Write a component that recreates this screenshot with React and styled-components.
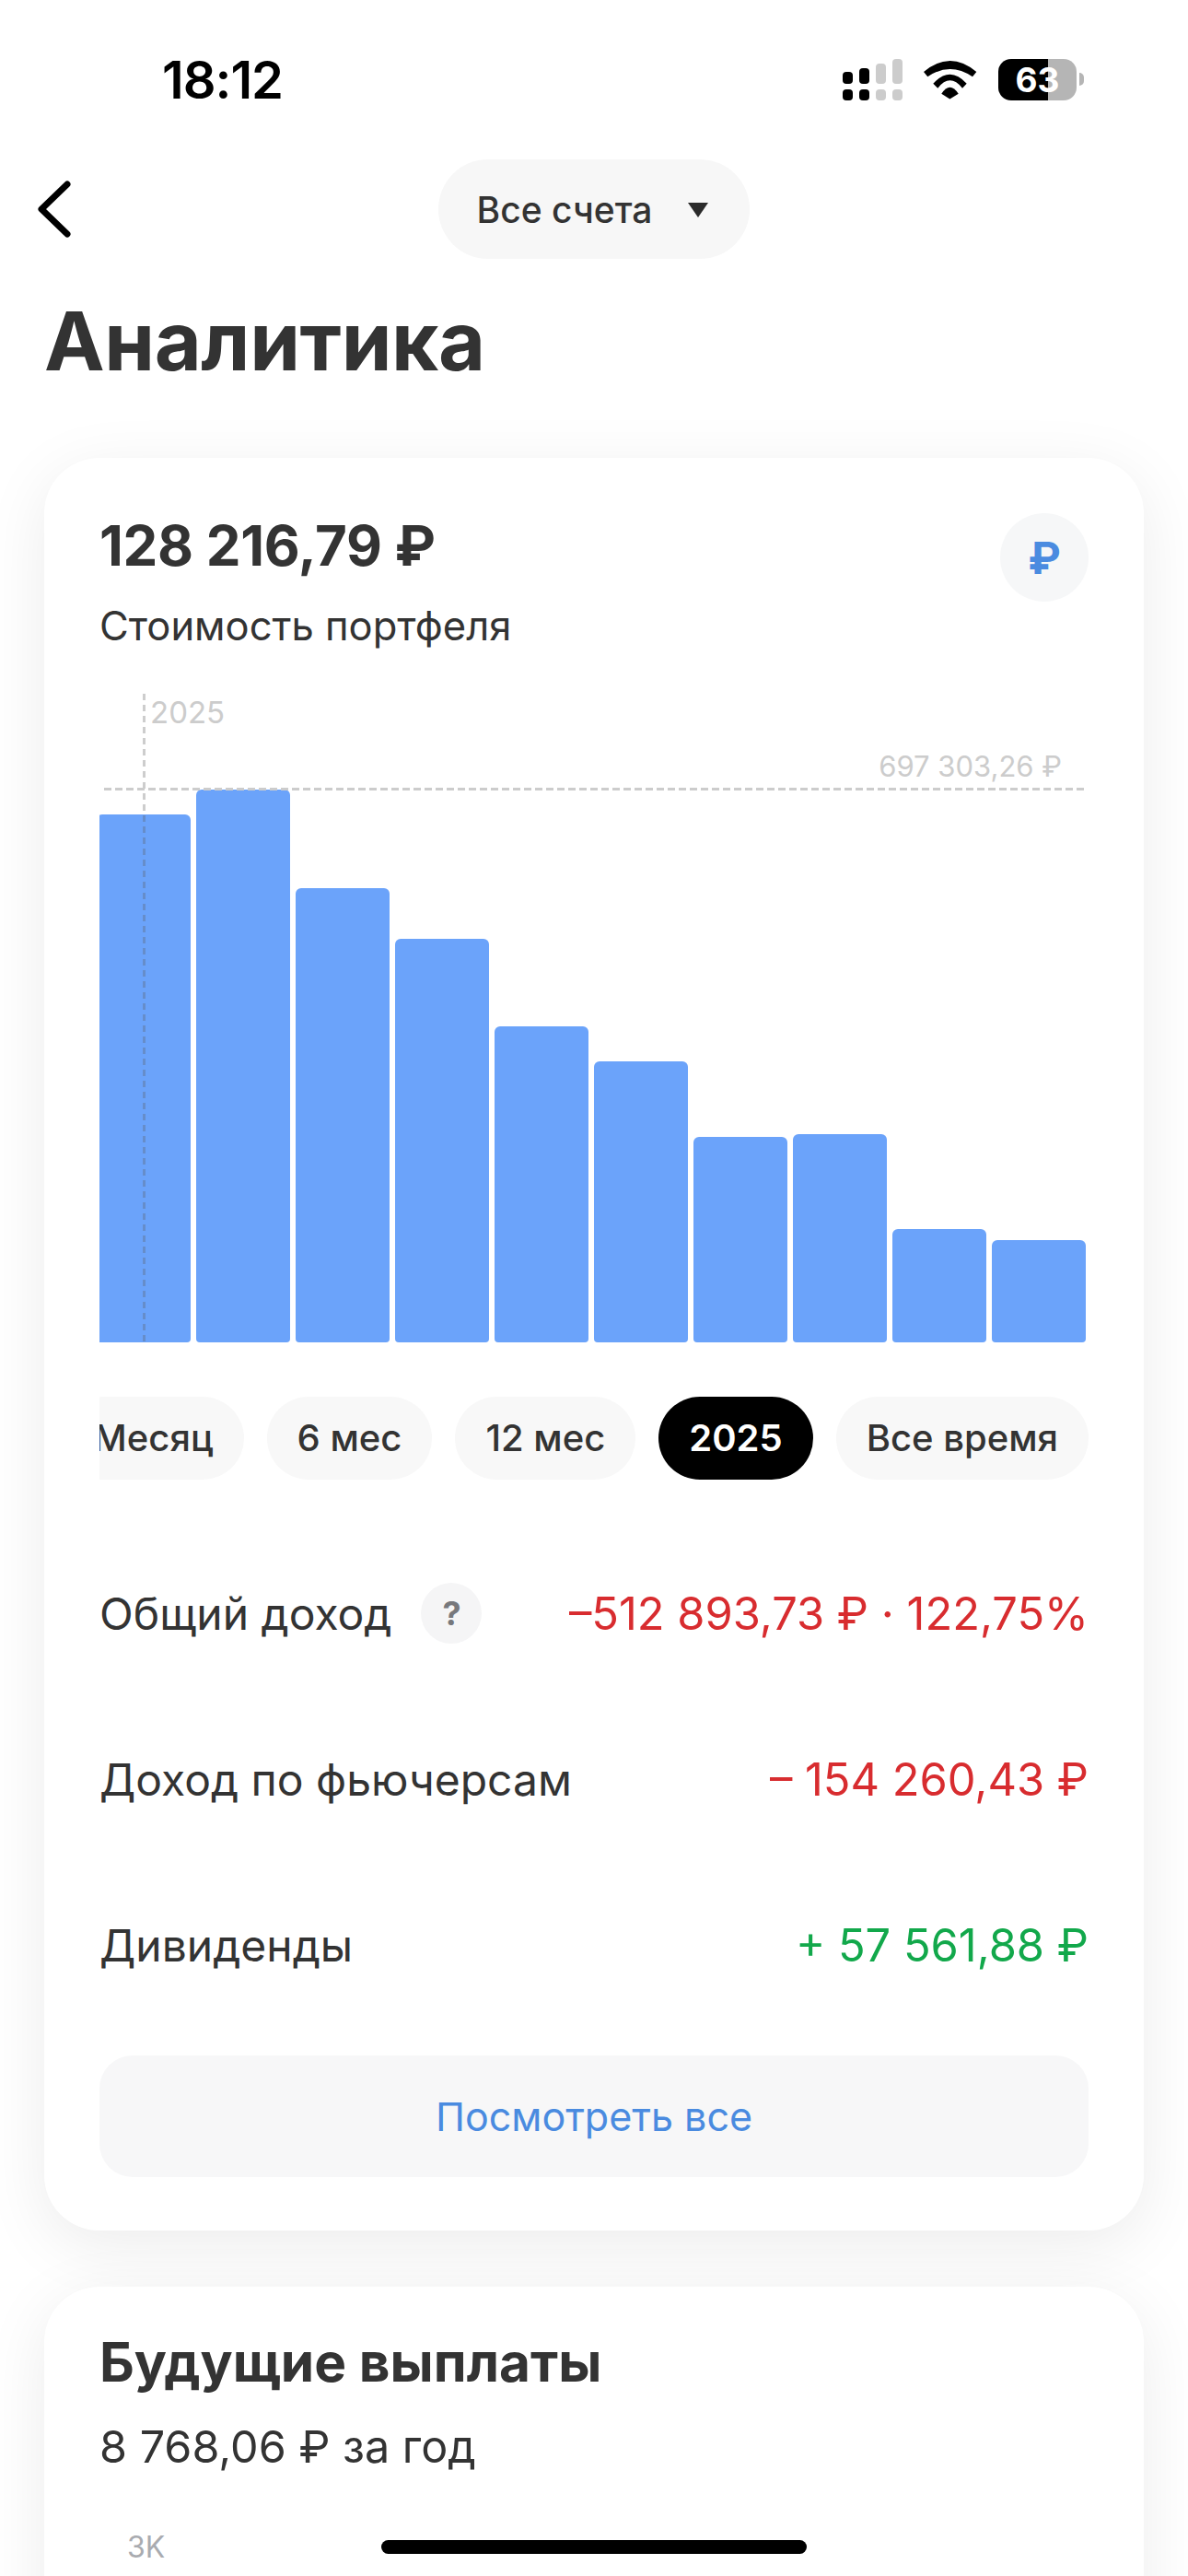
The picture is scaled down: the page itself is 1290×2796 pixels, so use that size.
import React from 'react'
import styled, { createGlobalStyle } from 'styled-components'

const GlobalStyle = createGlobalStyle`
  html, body {
    margin: 0;
    padding: 0;
    background: #ffffff;
    font-family: Inter, "Noto Sans", sans-serif;
    color: #333333;
  }
`

const Screen = styled.div`
  position: relative;
  width: 1290px;
  height: 2796px;
  overflow: hidden;
  background: #ffffff;
`

const StatusBar = styled.div`
  display: flex;
  align-items: center;
  justify-content: space-between;
  height: 45px;
  padding: 64px 121px 64px 176px;
`

const Time = styled.div`
  font-size: 56px;
  font-weight: 600;
  letter-spacing: -1px;
  color: #000000;
`

const StatusIcons = styled.div`
  display: flex;
  align-items: center;
  gap: 23px;
`

const Battery = styled.div`
  position: relative;
  width: 85px;
  height: 45px;
  border-radius: 14px;
  background: linear-gradient(90deg, #000000 63%, #b5b5b5 63%);
  color: #ffffff;
  font-size: 37px;
  font-weight: 700;
  line-height: 45px;
  text-align: center;

  &::after {
    content: '';
    position: absolute;
    left: 88px;
    top: 15px;
    width: 5px;
    height: 14px;
    border-radius: 0 6px 6px 0;
    background: #b5b5b5;
  }
`

const NavRow = styled.div`
  display: grid;
  grid-template-columns: 1fr auto 1fr;
  align-items: center;
  height: 108px;
  padding: 0 40px;
`

const BackIcon = styled.svg`
  display: block;
  width: 38px;
  height: 62px;
`

const AccountPill = styled.div`
  display: flex;
  align-items: center;
  gap: 39px;
  height: 108px;
  padding: 0 45px 0 42px;
  border-radius: 54px;
  background: #f7f7f7;
  font-size: 39px;
  font-weight: 500;
`

const Caret = styled.span`
  width: 0;
  height: 0;
  margin-top: 2px;
  border-left: 11px solid transparent;
  border-right: 11px solid transparent;
  border-top: 16px solid #2b2b2b;
`

const PageTitle = styled.h1`
  margin: 0;
  padding: 36px 0 0 48px;
  height: 216px;
  box-sizing: border-box;
  font-size: 88px;
  line-height: 106px;
  font-weight: 700;
  letter-spacing: -0.4px;
  color: #333333;
`

const Backdrop = styled.div`
  display: flex;
  flex-direction: column;
  gap: 61px;
  padding: 0 48px;
`

const Card = styled.section`
  box-sizing: border-box;
  width: 1194px;
  padding: 60px 60px 58px;
  border-radius: 60px;
  background: #ffffff;
  box-shadow: 0 16px 70px rgba(0, 0, 0, 0.08);
`

const PayoutCard = styled(Card)`
  height: 500px;
  padding-top: 48px;
`

const CardHead = styled.div`
  display: flex;
  justify-content: space-between;
  align-items: flex-start;
`

const Amount = styled.div`
  font-size: 60px;
  line-height: 70px;
  font-weight: 700;
  letter-spacing: -0.3px;
`

const SubText = styled.div`
  margin-top: ${p => p.$gap}px;
  font-size: ${p => p.$size}px;
  line-height: 54px;
  font-weight: 400;
  color: #333333;
`

const CurrencyBadge = styled.div`
  display: flex;
  align-items: center;
  justify-content: center;
  width: 96px;
  height: 96px;
  border-radius: 50%;
  background: #f6f7f8;
  color: #4a8be0;
  font-size: 48px;
  font-weight: 700;
`

const Chart = styled.div`
  position: relative;
  height: 704px;
  margin-top: 47px;
`

const Bars = styled.div`
  display: flex;
  justify-content: flex-end;
  align-items: flex-end;
  gap: 6px;
  width: 1071px;
  height: 100%;
  overflow: hidden;
`

const Bar = styled.div`
  flex: 0 0 102px;
  border-radius: 6px 6px 4px 4px;
  background: #6ba3fa;
`

const VerticalGuide = styled.div`
  position: absolute;
  left: 47px;
  top: 0;
  bottom: 0;
  width: 3px;
  background: repeating-linear-gradient(180deg, rgba(90, 90, 90, 0.3) 0 7px, transparent 7px 12px);
`

const HorizontalGuide = styled.div`
  position: absolute;
  left: 5px;
  top: 102px;
  width: 1064px;
  height: 3px;
  background: repeating-linear-gradient(90deg, #cccccc 0 8px, transparent 8px 12px);
`

const YearLabel = styled.div`
  position: absolute;
  left: 55px;
  top: 0;
  font-size: 33px;
  line-height: 40px;
  color: #cccccc;
`

const MaxLabel = styled.div`
  position: absolute;
  right: 29px;
  top: 60px;
  font-size: 31px;
  line-height: 38px;
  color: #cccccc;
`

const PeriodStrip = styled.div`
  display: flex;
  justify-content: flex-end;
  gap: 25px;
  margin-top: 59px;
  overflow: hidden;
`

const PeriodPill = styled.div`
  flex: none;
  height: 90px;
  line-height: 90px;
  padding: 0 33px;
  border-radius: 45px;
  background: ${p => (p.$active ? '#000000' : '#f8f8f8')};
  color: ${p => (p.$active ? '#ffffff' : '#333333')};
  font-size: 40px;
  font-weight: ${p => (p.$active ? 600 : 500)};
`

const Stats = styled.div`
  margin-top: 55px;
`

const StatRow = styled.div`
  display: flex;
  align-items: center;
  justify-content: space-between;
  height: 180px;
  font-size: 48px;
`

const StatLabel = styled.div`
  display: flex;
  align-items: center;
  gap: 32px;
  color: #333333;
`

const HelpDot = styled.span`
  display: flex;
  align-items: center;
  justify-content: center;
  width: 66px;
  height: 66px;
  border-radius: 50%;
  background: #f5f5f6;
  color: #77787c;
  font-size: 36px;
  font-weight: 700;
`

const StatValue = styled.div`
  font-size: 48.8px;
  color: ${p => (p.$up ? '#12a84b' : '#d82c2f')};
`

const MoreButton = styled.div`
  display: flex;
  align-items: center;
  justify-content: center;
  height: 132px;
  margin-top: 30px;
  border-radius: 36px;
  background: #f7f7f8;
  color: #4a8be0;
  font-size: 43px;
`

const SectionTitle = styled.div`
  font-size: 58.5px;
  line-height: 68px;
  font-weight: 700;
`

const AxisLabel = styled.div`
  margin: 62px 0 0 30px;
  font-size: 32px;
  line-height: 40px;
  color: #a9abb0;
`

const HomeIndicator = styled.div`
  position: absolute;
  left: 414px;
  top: 2757px;
  width: 462px;
  height: 15px;
  border-radius: 8px;
  background: #000000;
`

const barHeights = [573, 600, 493, 438, 343, 305, 223, 226, 123, 111]
const periods = ['Месяц', '6 мес', '12 мес', '2025', 'Все время']

const SignalIcon = () => (
  <svg width="65" height="45" viewBox="0 0 65 45">
    {[14, 10, 5, 0].map((top, i) => (
      <g key={i} fill={i < 2 ? '#000000' : '#cccccc'}>
        <rect x={i * 18} y={top} width="11" height={27 - top} rx="4" />
        <rect x={i * 18} y="33" width="11" height="12" rx="4" />
      </g>
    ))}
  </svg>
)

const WifiIcon = () => (
  <svg width="58" height="42" viewBox="0 0 58 42">
    <path d="M0 12Q28.7-12 57.3 12L53 17.3Q28.7 .7 4.3 17.3Z" />
    <path d="M10.3 24.7Q28.5 4.7 46.7 24.7L42 29.7Q28.5 13 15.3 29.7Z" />
    <path d="M19.3 35.7Q28.5 21.7 37.7 35.7L28.4 41.5Z" />
  </svg>
)

const App = () => {
  return (
    <>
      <GlobalStyle />
      <Screen>
        <StatusBar>
          <Time>18:12</Time>
          <StatusIcons>
            <SignalIcon />
            <WifiIcon />
            <Battery>63</Battery>
          </StatusIcons>
        </StatusBar>

        <NavRow>
          <BackIcon viewBox="0 0 38 62" fill="none" stroke="#000000" strokeWidth="7" strokeLinecap="round" strokeLinejoin="round">
            <path d="M33 4 5 31l28 27" />
          </BackIcon>
          <AccountPill>
            Все счета
            <Caret />
          </AccountPill>
          <div />
        </NavRow>

        <PageTitle>Аналитика</PageTitle>

        <Backdrop>
          <Card>
            <CardHead>
              <div>
                <Amount>128 216,79 ₽</Amount>
                <SubText $gap={25} $size={43.5}>Стоимость портфеля</SubText>
              </div>
              <CurrencyBadge>₽</CurrencyBadge>
            </CardHead>

            <Chart>
              <Bars>
                {barHeights.map((h, i) => (
                  <Bar key={i} style={{ height: h }} />
                ))}
              </Bars>
              <VerticalGuide />
              <HorizontalGuide />
              <YearLabel>2025</YearLabel>
              <MaxLabel>697 303,26 ₽</MaxLabel>
            </Chart>

            <PeriodStrip>
              {periods.map(p => (
                <PeriodPill key={p} $active={p === '2025'}>{p}</PeriodPill>
              ))}
            </PeriodStrip>

            <Stats>
              <StatRow>
                <StatLabel>Общий доход <HelpDot>?</HelpDot></StatLabel>
                <StatValue>–512 893,73 ₽ · 122,75%</StatValue>
              </StatRow>
              <StatRow>
                <StatLabel>Доход по фьючерсам</StatLabel>
                <StatValue>– 154 260,43 ₽</StatValue>
              </StatRow>
              <StatRow>
                <StatLabel>Дивиденды</StatLabel>
                <StatValue $up>+ 57 561,88 ₽</StatValue>
              </StatRow>
            </Stats>

            <MoreButton>Посмотреть все</MoreButton>
          </Card>

          <PayoutCard>
            <SectionTitle>Будущие выплаты</SectionTitle>
            <SubText $gap={31} $size={48.5}>8 768,06 ₽ за год</SubText>
            <AxisLabel>3K</AxisLabel>
          </PayoutCard>
        </Backdrop>

        <HomeIndicator />
      </Screen>
    </>
  )
}

export default App
